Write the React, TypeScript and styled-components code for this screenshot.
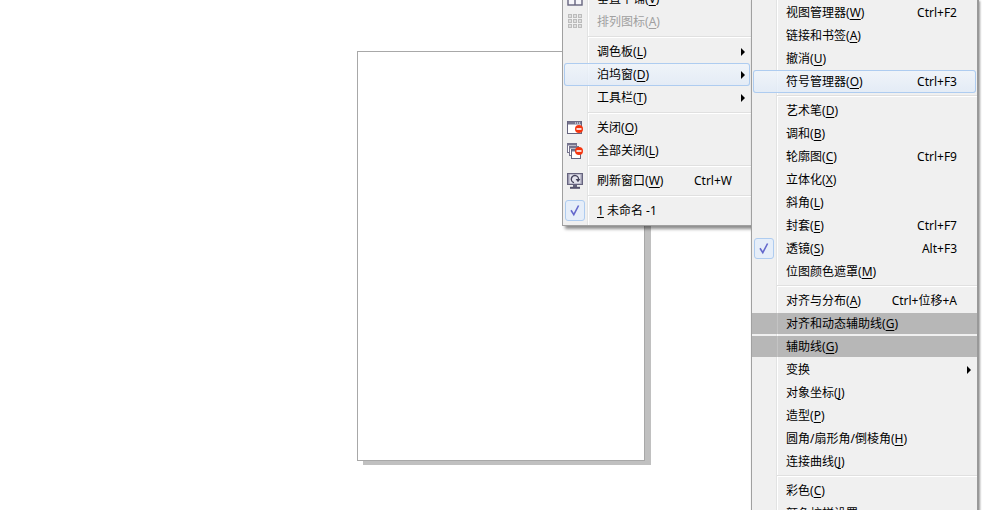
import React from "react";
import styled, { createGlobalStyle, css } from "styled-components";

const GlobalStyle = createGlobalStyle`
  * { box-sizing: border-box; }
  body {
    margin: 0;
    background: #fff;
    color: #000;
    font-family: "Noto Sans", "Noto Sans CJK SC", sans-serif;
    font-size: 12px;
  }
`;

const Workspace = styled.main`
  position: relative;
  height: 100vh;
  padding: 2px 0 0 2px;
  overflow: hidden;
  display: flex;
  justify-content: center;
  align-items: center;
`;

const Paper = styled.div`
  width: 288px;
  height: 410px;
  border: 1px solid #a8a8a8;
  background: #fff;
  box-shadow: 6px 4px 0 #c0c0c0;
`;

const MenuLayer = styled.nav`
  position: absolute;
  top: 0;
  right: 21px;
  display: flex;
  align-items: flex-start;
`;

const Menu = styled.div<{ $sub?: boolean }>`
  display: flex;
  flex-direction: column;
  width: ${(p) => (p.$sub ? 228 : 189)}px;
  margin-top: ${(p) => (p.$sub ? 0 : -14)}px;
  padding: 1px 0 3px;
  border: 0 solid #a0a0a0;
  border-left-width: 1px;
  border-bottom-width: 1px;
  background: linear-gradient(#e2e3e3, #e2e3e3) 24px 0 / 1px 100% no-repeat,
    linear-gradient(#fff, #fff) 25px 0 / 1px 100% no-repeat, #f0f0f0;
  box-shadow: 3px 3px 3px rgba(0, 0, 0, 0.45);
  ${(p) =>
    p.$sub &&
    css`
      position: relative;
      border-right: 2px solid #999;
      box-shadow: 1px 1px 2px rgba(0, 0, 0, 0.4);
    `}
`;

const Row = styled.button<{ $state?: State; $sub?: boolean }>`
  position: relative;
  display: grid;
  grid-template-columns: 24px 1fr auto;
  align-items: center;
  height: 23px;
  padding: 0 ${(p) => (p.$sub ? 20 : 19)}px 0 0;
  border: 0;
  background: none;
  font: inherit;
  line-height: 20px;
  text-align: left;
  white-space: nowrap;
  color: ${(p) => (p.$state === "disabled" ? "#a0a0a0" : "#000")};
  ${(p) =>
    p.$state === "hover" &&
    css`
      margin: 0 1px;
      padding-right: 19px;
      grid-template-columns: 23px 1fr auto;
      border-radius: 3px;
      box-shadow: inset 0 0 0 1px #aeccf0;
      background: linear-gradient(rgba(240, 245, 251, 0.8), rgba(224, 234, 247, 0.8));
    `}
  ${(p) =>
    p.$state === "marked" &&
    css`
      background: linear-gradient(#c4c4c4, #c4c4c4) 25px 0 / 1px 100% no-repeat, #b7b7b7;
      background-clip: padding-box;
      border: solid transparent;
      border-width: 1px 0;
    `}
`;

const Label = styled.span`
  padding-left: 10px;
`;

const Key = styled.u`
  text-decoration-thickness: 1px;
  text-decoration-skip-ink: none;
  text-underline-offset: 2px;
`;

const IconCell = styled.span`
  display: flex;
  justify-content: center;
`;

const Check = styled.span`
  display: flex;
  align-items: center;
  justify-content: center;
  width: 20px;
  height: 21px;
  border: 1px solid #aeccf0;
  border-radius: 3px;
  background: #e6eef9;
`;

const Arrow = styled.span<{ $inset?: boolean }>`
  position: absolute;
  right: ${(p) => (p.$inset ? 5 : 6)}px;
  width: 0;
  height: 0;
  border: solid transparent;
  border-width: 4px 0 4px 4px;
  border-left-color: #000;
`;

const Separator = styled.hr<{ $sub?: boolean }>`
  width: calc(100% - 25px);
  height: 2px;
  margin: ${(p) => (p.$sub ? "2px 0 2px 25px" : "3px 0 2px 25px")};
  border: 0;
  border-top: 1px solid #e0e0e0;
  background: #fff;
`;

type State = "hover" | "marked" | "disabled";
type IconName = "tile" | "grid" | "close" | "closeAll" | "refresh" | "check";
interface Item {
  text: string;
  hotkey?: string;
  leadKey?: string;
  shortcut?: string;
  icon?: IconName;
  arrow?: boolean;
  state?: State;
}

const StopBadge = ({ y }: { y: number }) => (
  <>
    <circle cx="12" cy={y} r="4" fill="#f5350f" />
    <path d={`M9.5 ${y}h5`} stroke="#fff" strokeWidth="1.6" />
  </>
);

function Icon({ name }: { name: IconName }) {
  if (name === "check") {
    return (
      <Check>
        <svg width="12" height="13" viewBox="0 0 12 13">
          <path d="M2 6.2 L4.8 10.6 L9.6 1.5" fill="none" stroke="#6468cc" strokeWidth="1.6" />
        </svg>
      </Check>
    );
  }
  return (
    <svg width="16" height="16" viewBox="0 0 16 16" fill="none">
      {name === "tile" && (
        <>
          <rect x="1" y="1" width="14" height="13" fill="#f6f6fa" stroke="#66647e" strokeWidth="1.4" />
          <path d="M1 2h14M8 1v13" stroke="#66647e" strokeWidth="1.4" />
        </>
      )}
      {name === "grid" &&
        [1, 6, 11].map((y) =>
          [1, 6, 11].map((x) => (
            <rect key={`${x}-${y}`} x={x + 0.5} y={y - 0.5} width="3" height="3" fill="#dedede" stroke="#bcbcbc" />
          ))
        )}
      {name === "close" && (
        <>
          <rect x="0.5" y="1.5" width="14" height="12" fill="#fff" stroke="#66647e" />
          <path d="M1 3h13" stroke="#77758e" strokeWidth="3" />
          <path d="M8 3h1M10 3h1M12 3h1" stroke="#fff" />
          <StopBadge y={9} />
        </>
      )}
      {name === "closeAll" && (
        <>
          <rect x="0.5" y="0.5" width="9" height="9" fill="#fff" stroke="#77758e" />
          <path d="M1 1.5h9" stroke="#77758e" strokeWidth="2" />
          <rect x="2.5" y="3.5" width="9" height="9" fill="#fff" stroke="#77758e" />
          <path d="M3 4.5h9" stroke="#77758e" strokeWidth="2" />
          <rect x="4.5" y="6.5" width="9" height="9" fill="#fff" stroke="#66647e" />
          <path d="M5 7.5h9" stroke="#77758e" strokeWidth="2" />
          <StopBadge y={8} />
        </>
      )}
      {name === "refresh" && (
        <>
          <rect x="0.5" y="0.5" width="15" height="11" fill="#9c9ab0" stroke="#66647e" />
          <rect x="2.5" y="1.5" width="11" height="9" fill="#e6e6f0" />
          <path d="M7 9.6a3.6 3.6 0 1 1 4.4-2.6" stroke="#44425a" strokeWidth="1.4" />
          <path d="M8.6 6h4.8L11 9.2z" fill="#44425a" />
          <path d="M8 12v2" stroke="#66647e" strokeWidth="4" />
          <path d="M3 14.8h10" stroke="#55536d" strokeWidth="2" />
        </>
      )}
    </svg>
  );
}

function MenuItem({ item, sub }: { item: Item; sub?: boolean }) {
  const checked = item.icon === "check";
  return (
    <Row
      type="button"
      role={checked ? "menuitemcheckbox" : "menuitem"}
      aria-checked={checked || undefined}
      aria-haspopup={item.arrow ? "menu" : undefined}
      disabled={item.state === "disabled"}
      $state={item.state}
      $sub={sub}
    >
      <IconCell>{item.icon && <Icon name={item.icon} />}</IconCell>
      <Label>
        {item.leadKey && <Key>{item.leadKey}</Key>}
        {item.text}
        {item.hotkey && (
          <>
            (<Key>{item.hotkey}</Key>)
          </>
        )}
      </Label>
      {item.shortcut && <span>{item.shortcut}</span>}
      {item.arrow && <Arrow $inset={item.state === "hover"} />}
    </Row>
  );
}

function MenuPanel({ groups, sub }: { groups: Item[][]; sub?: boolean }) {
  return (
    <Menu role="menu" $sub={sub}>
      {groups.map((group, i) => (
        <React.Fragment key={i}>
          {i > 0 && <Separator $sub={sub} />}
          {group.map((item) => (
            <MenuItem key={item.text} item={item} sub={sub} />
          ))}
        </React.Fragment>
      ))}
    </Menu>
  );
}

const windowMenu: Item[][] = [
  [
    { text: "垂直平铺", hotkey: "V", icon: "tile" },
    { text: "排列图标", hotkey: "A", icon: "grid", state: "disabled" },
  ],
  [
    { text: "调色板", hotkey: "L", arrow: true },
    { text: "泊坞窗", hotkey: "D", arrow: true, state: "hover" },
    { text: "工具栏", hotkey: "T", arrow: true },
  ],
  [
    { text: "关闭", hotkey: "O", icon: "close" },
    { text: "全部关闭", hotkey: "L", icon: "closeAll" },
  ],
  [{ text: "刷新窗口", hotkey: "W", shortcut: "Ctrl+W", icon: "refresh" }],
  [{ leadKey: "1", text: " 未命名 -1", icon: "check" }],
];

const dockerMenu: Item[][] = [
  [
    { text: "视图管理器", hotkey: "W", shortcut: "Ctrl+F2" },
    { text: "链接和书签", hotkey: "A" },
    { text: "撤消", hotkey: "U" },
    { text: "符号管理器", hotkey: "O", shortcut: "Ctrl+F3", state: "hover" },
  ],
  [
    { text: "艺术笔", hotkey: "D" },
    { text: "调和", hotkey: "B" },
    { text: "轮廓图", hotkey: "C", shortcut: "Ctrl+F9" },
    { text: "立体化", hotkey: "X" },
    { text: "斜角", hotkey: "L" },
    { text: "封套", hotkey: "E", shortcut: "Ctrl+F7" },
    { text: "透镜", hotkey: "S", shortcut: "Alt+F3", icon: "check" },
    { text: "位图颜色遮罩", hotkey: "M" },
  ],
  [
    { text: "对齐与分布", hotkey: "A", shortcut: "Ctrl+位移+A" },
    { text: "对齐和动态辅助线", hotkey: "G", state: "marked" },
    { text: "辅助线", hotkey: "G", state: "marked" },
    { text: "变换", arrow: true },
    { text: "对象坐标", hotkey: "J" },
    { text: "造型", hotkey: "P" },
    { text: "圆角/扇形角/倒棱角", hotkey: "H" },
    { text: "连接曲线", hotkey: "J" },
  ],
  [{ text: "彩色", hotkey: "C" }, { text: "颜色校样设置" }],
];

export default function App() {
  return (
    <>
      <GlobalStyle />
      <Workspace>
        <Paper />
        <MenuLayer aria-label="窗口">
          <MenuPanel groups={windowMenu} />
          <MenuPanel groups={dockerMenu} sub />
        </MenuLayer>
      </Workspace>
    </>
  );
}
